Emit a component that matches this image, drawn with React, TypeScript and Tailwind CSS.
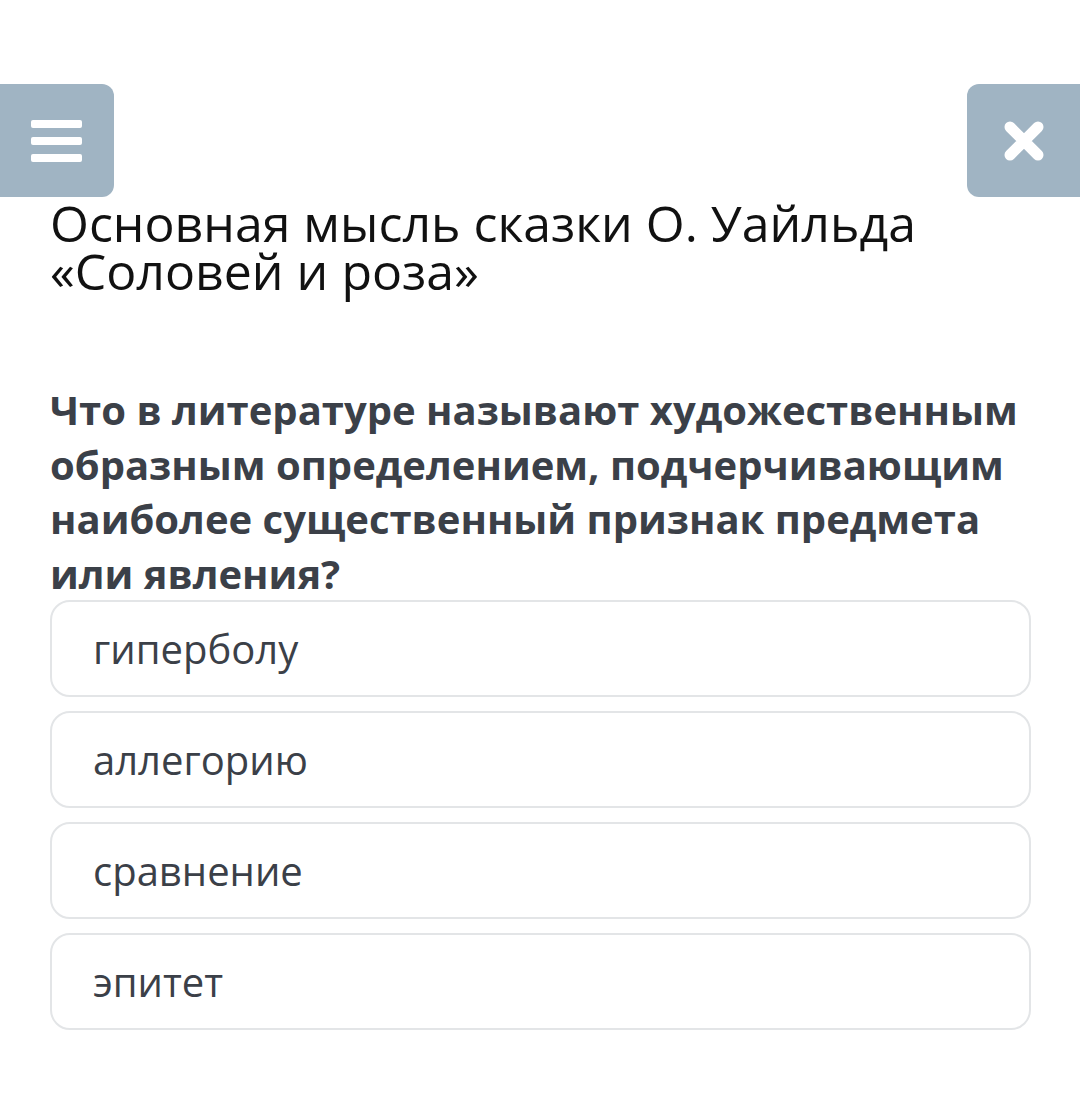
const options = ['гиперболу', 'аллегорию', 'сравнение', 'эпитет'];

export default function App() {
  return (
    <div className="min-h-[1095px] w-[1080px] bg-white pt-[84px] font-['Open_Sans',sans-serif]">
      {/* top buttons */}
      <div className="flex items-start justify-between">
        <button className="flex h-[113px] w-[114px] flex-col items-center justify-center gap-[9px] rounded-r-[12px] bg-[#a0b4c3] pr-[1px]">
          <span className="block h-[8px] w-[51px] rounded-[2px] bg-white" />
          <span className="block h-[8px] w-[51px] rounded-[2px] bg-white" />
          <span className="block h-[8px] w-[51px] rounded-[2px] bg-white" />
        </button>
        <button className="flex h-[113px] w-[113px] items-center justify-center rounded-l-[12px] bg-[#a0b4c3]">
          <svg width="44" height="44" viewBox="0 0 44 44">
            <path d="M8 8 L36 36 M36 8 L8 36" stroke="white" strokeWidth="11" strokeLinecap="round" />
          </svg>
        </button>
      </div>

      <div className="px-[50px]">
        <h1 className="mt-[2px] text-[50px] font-normal leading-[48px] text-[#111]">
          Основная мысль сказки О. Уайльда
          <br />
          «Соловей и роза»
        </h1>

        <p className="mt-[88px] text-[40px] font-bold leading-[54.5px] text-[#3b4048]">
          Что в литературе называют художественным образным определением, подчерчивающим наиболее существенный признак предмета или явления?
        </p>

        <div className="-mt-[1px] flex w-[981px] flex-col gap-[14px]">
          {options.map((o) => (
            <div
              key={o}
              className="flex h-[97px] items-center rounded-[20px] border-2 border-[#e3e5e7] pl-[41px] text-[40px] text-[#3b4048]"
            >
              {o}
            </div>
          ))}
        </div>
      </div>
    </div>
  );
}
